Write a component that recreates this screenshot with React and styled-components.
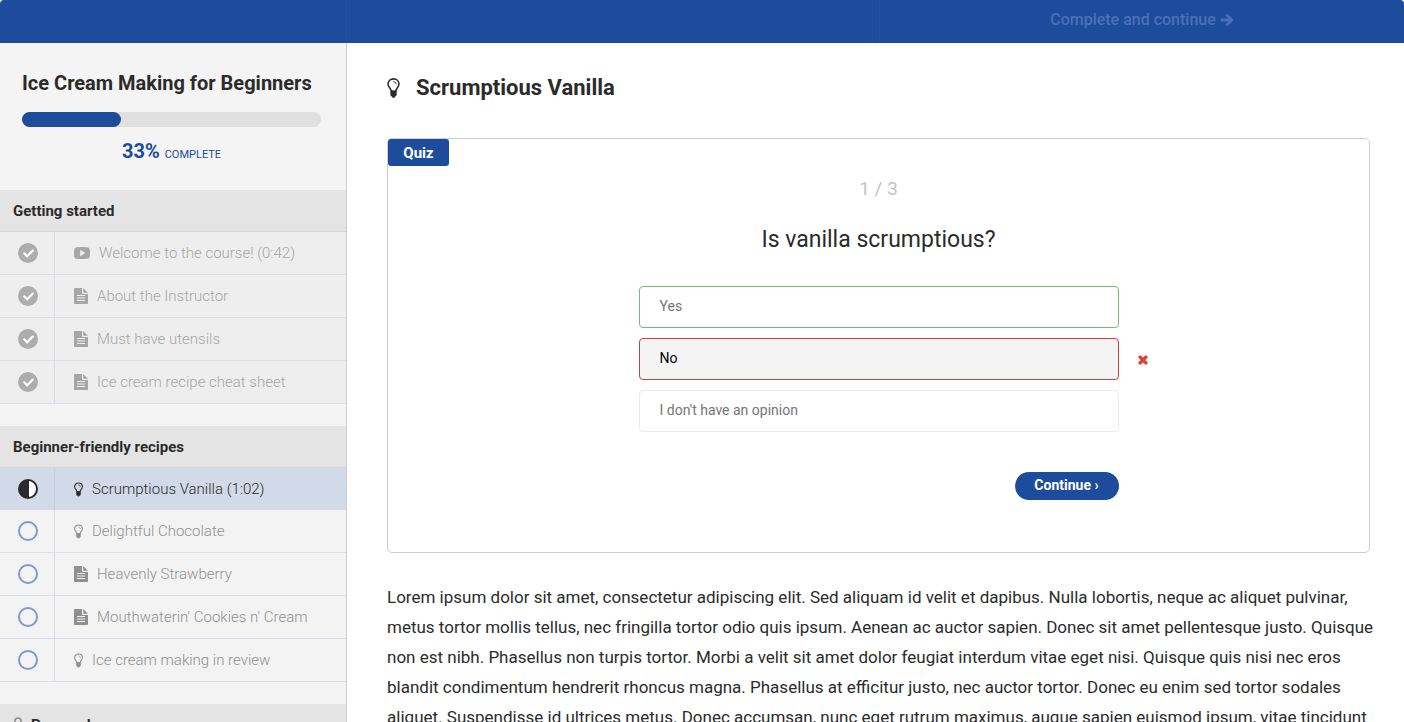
import styled, { createGlobalStyle } from "styled-components";
import { FaCheck, FaTimes, FaArrowRight } from "react-icons/fa";

const GlobalStyle = createGlobalStyle`
	:root {
		--blue: #1c4c9b;
		--ink: #2b2b2b;
		--line: #dadde8;
		--panel: #f4f4f4;
	}

	* {
		box-sizing: border-box;
	}

	body {
		margin: 0;
		overflow: hidden;
		font-family: Roboto, "Liberation Sans", sans-serif;
		color: var(--ink);
		background: #fff;
	}

	h1, h2, h3, p, ul {
		margin: 0;
		padding: 0;
	}

	button {
		font-family: inherit;
		cursor: pointer;
	}
`;

const Page = styled.div`
	height: 100vh;
	display: flex;
	flex-direction: column;
	overflow: hidden;
`;

const TopBar = styled.header`
	flex: none;
	display: grid;
	grid-template-columns: 347px 1fr 524px;
	height: 43px;
	background: var(--blue);
	border-radius: 4px 4px 0 0;
`;

const TopCell = styled.div`
	display: flex;
	justify-content: center;
	padding-bottom: 4px;
	border-right: 1px solid #2452a0;

	&:last-child {
		border-right: none;
	}
`;

const CompleteButton = styled.button`
	display: flex;
	align-items: center;
	gap: 4px;
	padding: 0;
	border: none;
	background: none;
	font-size: 16px;
	font-weight: 500;
	color: #4a72b4;

	svg {
		stroke: currentColor;
		stroke-width: 30;
		overflow: visible;
	}
`;

const Body = styled.div`
	flex: 1;
	min-height: 0;
	display: flex;
`;

const Sidebar = styled.aside`
	flex: none;
	width: 347px;
	overflow: hidden;
	background: var(--panel);
	border-right: 1px solid #cfcfcf;
`;

const CourseHead = styled.div`
	height: 147px;
	padding: 28px 25px 0 22px;
`;

const CourseTitle = styled.h1`
	font-size: 20px;
	line-height: 24px;
	font-weight: 700;
	white-space: nowrap;
`;

const ProgressTrack = styled.div`
	height: 15px;
	margin-top: 17px;
	border-radius: 8px;
	background: #e0e0e0;
`;

const ProgressFill = styled.div`
	height: 100%;
	border-radius: 8px;
	background: var(--blue);
`;

const ProgressText = styled.p`
	margin-top: 12px;
	text-align: center;
	font-size: 11px;
	line-height: 24px;
	color: var(--blue);

	strong {
		font-size: 20px;
		margin-right: 5px;
	}
`;

const Section = styled.section`
	margin-bottom: 22px;
`;

const SectionTitle = styled.h2`
	display: flex;
	align-items: center;
	gap: 8px;
	height: 42px;
	padding: 0 13px;
	background: #e4e4e4;
	border-bottom: 1px solid #d3d3d8;
	font-size: 15px;
	font-weight: 700;

	svg {
		color: #8c8c8c;
	}
`;

const Lectures = styled.ul`
	list-style: none;
`;

const rowColors = {
	done: { bg: "#eeeeee", text: "#a6a6a6" },
	current: { bg: "#d2d9e8", text: "#2b2b2b" },
	todo: { bg: "#f3f3f3", text: "#909090" },
};

const LectureRow = styled.a`
	display: flex;
	height: ${(p) => (p.$state === "current" ? "42px" : "43px")};
	background: ${(p) => rowColors[p.$state].bg};
	color: ${(p) => rowColors[p.$state].text};
	border-bottom: ${(p) =>
		p.$state === "current" ? "none" : "1px solid var(--line)"};
	font-size: 15px;
	text-decoration: none;
	white-space: nowrap;
`;

const StatusCell = styled.span`
	flex: none;
	display: flex;
	align-items: center;
	width: 55px;
	padding-left: 18px;
	border-right: 1px solid
		${(p) => (p.$state === "current" ? "#c3cde3" : "var(--line)")};
`;

const LectureName = styled.span`
	display: flex;
	align-items: center;
	gap: 9px;
	padding-left: 19px;
	font-weight: 300;
`;

const StatusDot = styled.span`
	display: flex;
	align-items: center;
	justify-content: center;
	width: 20px;
	height: 20px;
	border-radius: 50%;
	color: #fff;
	${(p) => p.$state === "done" && "background: #adadad;"}
	${(p) => p.$state === "todo" && "border: 2px solid #8099cb;"}
	${(p) =>
		p.$state === "current" &&
		"border: 2px solid #2b2b2b; background: linear-gradient(90deg, #2b2b2b 55%, #fff 55%);"}
`;

const Main = styled.main`
	flex: 1;
	min-width: 0;
	overflow: hidden;
	padding: 31px 34px 0 40px;
`;

const LectureHeading = styled.h2`
	display: flex;
	align-items: center;
	gap: 16px;
	font-size: 22px;
	line-height: 28px;
	font-weight: 700;
`;

const QuizBox = styled.section`
	margin-top: 36px;
	padding-bottom: 52px;
	border: 1px solid #cfcfcf;
	border-radius: 5px;
`;

const QuizTag = styled.span`
	display: inline-flex;
	align-items: center;
	justify-content: center;
	width: 61px;
	height: 27px;
	border-radius: 3px;
	background: var(--blue);
	color: #fff;
	font-size: 15px;
	font-weight: 700;
	vertical-align: top;
`;

const QuizBody = styled.div`
	width: 480px;
	margin: 0 auto;
	display: flex;
	flex-direction: column;
`;

const Counter = styled.p`
	margin-top: 11px;
	text-align: center;
	font-size: 19px;
	line-height: 24px;
	color: #c4c4c4;
`;

const Question = styled.h3`
	margin: 24px 0 31px;
	text-align: center;
	font-size: 23px;
	line-height: 30px;
	font-weight: 400;
`;

const answerBorders = {
	right: "#6bbf7a",
	wrong: "#c8433a",
	plain: "#ebebeb",
};

const AnswerRow = styled.div`
	position: relative;
	margin-bottom: 10px;
`;

const Answer = styled.button`
	display: block;
	width: 100%;
	height: 42px;
	padding: 0 20px 2px;
	border: 1px solid ${(p) => answerBorders[p.$result]};
	border-radius: 4px;
	background: ${(p) => (p.$result === "wrong" ? "#f4f4f4" : "#fff")};
	color: ${(p) => (p.$result === "wrong" ? "#000" : "#757575")};
	font-size: 14px;
	font-weight: 400;
	text-align: left;
`;

const WrongMark = styled.span`
	position: absolute;
	top: 0;
	left: calc(100% + 18px);
	height: 44px;
	display: flex;
	align-items: center;
	color: #da4337;

	svg {
		stroke: currentColor;
		stroke-width: 50;
		overflow: visible;
	}
`;

const ContinueButton = styled.button`
	align-self: flex-end;
	margin-top: 30px;
	width: 104px;
	height: 28px;
	padding: 0 0 2px;
	border: none;
	border-radius: 14px;
	background: var(--blue);
	color: #fff;
	font-size: 14px;
	font-weight: 700;
`;

const LectureText = styled.p`
	margin: 29px -8px 0 0;
	font-size: 17px;
	line-height: 30px;
`;

function BulbIcon({ size = 15 }) {
	return (
		<svg
			width={Math.round(size * 0.63)}
			height={size}
			viewBox="0 0 12 19"
			fill="none"
			aria-hidden="true"
		>
			<path
				d="M4 12.6 C3.9 10.2 .8 9 .8 5.700 C.8 2.700 3.200 .8 6 .8 C8.800 .8 11.200 2.700 11.200 5.700 C11.200 9 8.100 10.200 8 12.600 Z"
				stroke="currentColor"
				strokeWidth="1.5"
			/>
			<path
				d="M3 12.200 H9 V16 Q9 17.200 7.700 17.500 Q7.200 18.900 6 18.900 Q4.800 18.900 4.300 17.500 Q3 17.200 3 16 Z"
				fill="currentColor"
			/>
			<path
				d="M6.200 3.400 Q8.400 3.600 8.600 5.600"
				stroke="currentColor"
				strokeWidth="0.9"
				strokeLinecap="round"
			/>
		</svg>
	);
}

function FileIcon() {
	return (
		<svg width="14" height="16" viewBox="0 0 14 16" aria-hidden="true">
			<path
				fill="currentColor"
				fillRule="evenodd"
				d="M0 .8 Q0 0 .8 0 H8 V5 Q8 6 9 6 H14 V15.200 Q14 16 13.200 16 H.8 Q0 16 0 15.200 Z M3 7 V8 H11 V7 Z M3 9.500 V10.500 H11 V9.500 Z M3 12 V13 H11 V12 Z M9.200 0 L14 4.800 H9.200 Z"
			/>
		</svg>
	);
}

function VideoIcon() {
	return (
		<svg width="16" height="12" viewBox="0 0 16 12" aria-hidden="true">
			<path
				fill="currentColor"
				fillRule="evenodd"
				d="M2.500 .3 Q8 -.3 13.500 .3 Q15.600 .5 15.800 2.600 Q16.200 6 15.800 9.400 Q15.600 11.500 13.500 11.700 Q8 12.300 2.500 11.700 Q.4 11.500 .2 9.400 Q-.2 6 .2 2.600 Q.4 .5 2.500 .3 Z M6.200 2.800 V9.200 L11.400 6 Z"
			/>
		</svg>
	);
}

function LockIcon() {
	return (
		<svg width="10" height="15" viewBox="0 0 10 15" aria-hidden="true">
			<path
				d="M2 8 V4 Q2 1 5 1 Q8 1 8 4 V8"
				fill="none"
				stroke="currentColor"
				strokeWidth="1.6"
			/>
			<rect y="7" width="10" height="8" rx="1" fill="currentColor" />
		</svg>
	);
}

const icons = { video: VideoIcon, file: FileIcon, quiz: BulbIcon };

const sections = [
	{
		title: "Getting started",
		lectures: [
			{ name: "Welcome to the course! (0:42)", type: "video", state: "done" },
			{ name: "About the Instructor", type: "file", state: "done" },
			{ name: "Must have utensils", type: "file", state: "done" },
			{ name: "Ice cream recipe cheat sheet", type: "file", state: "done" },
		],
	},
	{
		title: "Beginner-friendly recipes",
		lectures: [
			{ name: "Scrumptious Vanilla (1:02)", type: "quiz", state: "current" },
			{ name: "Delightful Chocolate", type: "quiz", state: "todo" },
			{ name: "Heavenly Strawberry", type: "file", state: "todo" },
			{ name: "Mouthwaterin' Cookies n' Cream", type: "file", state: "todo" },
			{ name: "Ice cream making in review", type: "quiz", state: "todo" },
		],
	},
	{ title: "Personal", locked: true, lectures: [] },
];

const answers = [
	{ text: "Yes", result: "right" },
	{ text: "No", result: "wrong" },
	{ text: "I don't have an opinion", result: "plain" },
];

const progress = 33;

export default function App() {
	return (
		<Page>
			<GlobalStyle />
			<TopBar>
				<TopCell />
				<TopCell />
				<TopCell>
					<CompleteButton>
						Complete and continue <FaArrowRight size={14} />
					</CompleteButton>
				</TopCell>
			</TopBar>
			<Body>
				<Sidebar>
					<CourseHead>
						<CourseTitle>Ice Cream Making for Beginners</CourseTitle>
						<ProgressTrack>
							<ProgressFill style={{ width: `${progress}%` }} />
						</ProgressTrack>
						<ProgressText>
							<strong>{progress}%</strong>COMPLETE
						</ProgressText>
					</CourseHead>
					{sections.map((section) => (
						<Section key={section.title}>
							<SectionTitle>
								{section.locked && <LockIcon />}
								{section.title}
							</SectionTitle>
							<Lectures>
								{section.lectures.map(({ name, type, state }) => {
									const Icon = icons[type];
									return (
										<li key={name}>
											<LectureRow href="#" $state={state}>
												<StatusCell $state={state}>
													<StatusDot $state={state}>
														{state === "done" && <FaCheck size={11} />}
													</StatusDot>
												</StatusCell>
												<LectureName>
													<Icon />
													{name}
												</LectureName>
											</LectureRow>
										</li>
									);
								})}
							</Lectures>
						</Section>
					))}
				</Sidebar>
				<Main>
					<LectureHeading>
						<BulbIcon size={20} />
						Scrumptious Vanilla
					</LectureHeading>
					<QuizBox>
						<QuizTag>Quiz</QuizTag>
						<QuizBody>
							<Counter>1 / 3</Counter>
							<Question>Is vanilla scrumptious?</Question>
							{answers.map(({ text, result }) => (
								<AnswerRow key={text}>
									<Answer $result={result}>{text}</Answer>
									{result === "wrong" && (
										<WrongMark>
											<FaTimes size={12} />
										</WrongMark>
									)}
								</AnswerRow>
							))}
							<ContinueButton>Continue ›</ContinueButton>
						</QuizBody>
					</QuizBox>
					<LectureText>
						Lorem ipsum dolor sit amet, consectetur adipiscing elit. Sed aliquam
						id velit et dapibus. Nulla lobortis, neque ac aliquet pulvinar,
						metus tortor mollis tellus, nec fringilla tortor odio quis ipsum.
						Aenean ac auctor sapien. Donec sit amet pellentesque justo. Quisque
						non est nibh. Phasellus non turpis tortor. Morbi a velit sit amet
						dolor feugiat interdum vitae eget nisi. Quisque quis nisi nec eros
						blandit condimentum hendrerit rhoncus magna. Phasellus at efficitur
						justo, nec auctor tortor. Donec eu enim sed tortor sodales aliquet.
						Suspendisse id ultrices metus. Donec accumsan, nunc eget rutrum
						maximus, augue sapien euismod ipsum, vitae tincidunt
					</LectureText>
				</Main>
			</Body>
		</Page>
	);
}
